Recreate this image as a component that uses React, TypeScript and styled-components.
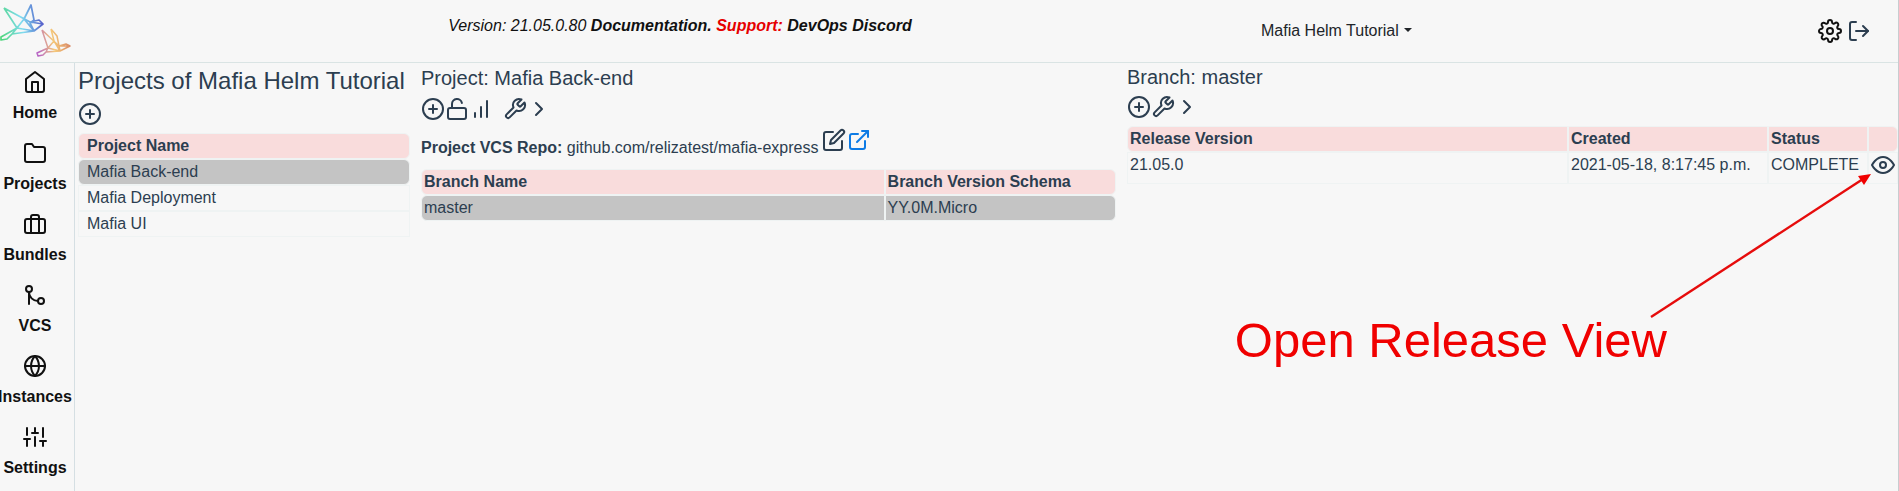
import React from "react";
import styled, { createGlobalStyle, css } from "styled-components";
import {
  FiHome, FiFolder, FiBriefcase, FiGitMerge, FiGlobe, FiSliders, FiPlusCircle,
  FiUnlock, FiBarChart, FiTool, FiChevronRight, FiEdit, FiExternalLink, FiSettings, FiLogOut, FiEye,
} from "react-icons/fi";

const ink = "#2c3e50";

const GlobalStyle = createGlobalStyle`
  *, *::before, *::after { box-sizing: border-box; }
  body {
    margin: 0;
    background: #f7f7f7;
    color: ${ink};
    font: 16px/24px "Liberation Sans", Arial, sans-serif;
  }
`;

const Page = styled.div`
  display: flex;
  flex-direction: column;
  min-height: 100vh;
  border-right: 1px solid #c8cdd0;
`;

const Header = styled.header`
  display: grid;
  grid-template-columns: 75px minmax(0, 1fr) minmax(0, 557px) 80px;
  height: 63px;
  border-bottom: 1px solid #dae4e4;
  color: #111;
`;

const Logo = styled.svg`
  width: 72px;
  height: 60px;
`;

const VersionLine = styled.p`
  margin: 14px 0 0;
  padding-left: 24px;
  text-align: center;
  font-style: italic;
`;

const TextLink = styled.a`
  color: inherit;
  font-weight: bold;
  text-decoration: none;
`;

const Support = styled.strong`
  color: #e60000;
`;

const OrgButton = styled.button`
  display: flex;
  align-items: center;
  align-self: center;
  justify-self: start;
  gap: 5px;
  padding: 0;
  border: 0;
  background: none;
  color: #212529;
  font: inherit;
  &::after {
    content: "";
    margin-bottom: 2px;
    border: 4px solid transparent;
    border-top-color: currentColor;
    border-bottom: 0;
  }
`;

const HeaderIcons = styled.div`
  display: flex;
  align-items: center;
  gap: 5px;
`;

const IconButton = styled.button<{ $color?: string }>`
  display: flex;
  padding: 0;
  border: 0;
  background: none;
  color: ${(p) => p.$color ?? ink};
`;

const Body = styled.div`
  display: flex;
  flex: 1;
`;

const Sidebar = styled.nav`
  display: flex;
  flex: 0 0 75px;
  flex-direction: column;
  padding-top: 7px;
  border-right: 1px solid #d5dfe3;
`;

const NavItem = styled.a`
  display: flex;
  flex-direction: column;
  align-items: center;
  gap: 7px;
  width: 70px;
  height: 71px;
  color: #111;
  font-weight: bold;
  text-decoration: none;
  &:last-child { height: 64px; }
`;

const Columns = styled.main`
  display: grid;
  flex: 1;
  grid-template-columns: 332fr 695fr 771fr;
  column-gap: 11px;
  align-items: start;
  padding-left: 3px;
`;

const Panel = styled.section`
  min-width: 0;
`;

const titleSizes = {
  large: css`font-size: 24px; line-height: 35px;`,
  medium: css`font-size: 20px; line-height: 30px;`,
  small: css`font-size: 20px; line-height: 28px;`,
};

const Title = styled.h1<{ $size: keyof typeof titleSizes }>`
  margin: 0;
  font-weight: normal;
  white-space: nowrap;
  ${(p) => titleSizes[p.$size]}
`;

const Toolbar = styled.div`
  display: flex;
  align-items: center;
  height: 32px;
  margin-bottom: 3px;
`;

const Spaced = styled(IconButton)`
  margin-left: 10px;
`;

const Repo = styled.div`
  display: flex;
  align-items: flex-start;
  gap: 1px;
  height: 41px;
`;

const RepoText = styled.span`
  padding: 8px 3px 0 0;
  white-space: nowrap;
`;

const RepoLink = styled.a`
  display: flex;
  color: #0d7be5;
`;

const Table = styled.table`
  width: 100%;
  table-layout: fixed;
  border-spacing: 0;
  th { background: #f9dcdc; }
  th:first-child { border-top-left-radius: 6px; border-bottom-left-radius: 6px; }
  th:last-child { border-top-right-radius: 6px; border-bottom-right-radius: 6px; }
`;

const cell = css<{ $inset?: boolean }>`
  height: 26px;
  padding: 0 ${(p) => (p.$inset ? 8 : 2)}px;
  border: 1px solid #eff3f3;
  text-align: left;
  vertical-align: top;
  white-space: nowrap;
`;

const Th = styled.th<{ $inset?: boolean; $width?: string }>`
  ${cell}
  width: ${(p) => p.$width ?? "auto"};
`;

const Td = styled.td<{ $inset?: boolean }>`
  ${cell}
`;

const Row = styled.tr<{ $selected?: boolean }>`
  ${(p) => p.$selected && css`
    td { background: #c4c4c4; }
    td:first-child { border-top-left-radius: 6px; border-bottom-left-radius: 6px; }
    td:last-child { border-top-right-radius: 6px; border-bottom-right-radius: 6px; }
  `}
`;

const ReleaseRow = styled(Row)`
  td { height: 32px; }
`;

const Callout = styled.aside`
  position: absolute;
  top: 172px;
  right: 26px;
  width: 640px;
  height: 200px;
  color: #f00000;
  pointer-events: none;
`;

const Arrow = styled.svg`
  position: absolute;
  top: 0;
  right: 0;
`;

const CalloutText = styled.p`
  position: absolute;
  right: 206px;
  bottom: 4px;
  margin: 0;
  font-size: 49px;
  line-height: 56px;
  white-space: nowrap;
`;

const navigation = [
  { label: "Home", Icon: FiHome },
  { label: "Projects", Icon: FiFolder },
  { label: "Bundles", Icon: FiBriefcase },
  { label: "VCS", Icon: FiGitMerge },
  { label: "Instances", Icon: FiGlobe },
  { label: "Settings", Icon: FiSliders },
];

const projects = ["Mafia Back-end", "Mafia Deployment", "Mafia UI"];

function Birds() {
  return (
    <Logo viewBox="0 0 72 60" fill="none" strokeLinejoin="round" role="img" aria-label="Reliza">
      <defs>
        <linearGradient id="large" gradientUnits="userSpaceOnUse" x1="0" y1="30" x2="44" y2="22">
          <stop stopColor="#4fd67c" />
          <stop offset=".5" stopColor="#7fdcf0" />
          <stop offset="1" stopColor="#5458c8" />
        </linearGradient>
        <linearGradient id="small" gradientUnits="userSpaceOnUse" x1="38" y1="50" x2="70" y2="44">
          <stop stopColor="#b765c4" />
          <stop offset=".5" stopColor="#f5c878" />
          <stop offset="1" stopColor="#d98a67" />
        </linearGradient>
      </defs>
      <path stroke="url(#large)" strokeWidth="1.7" d="M4 8 17 28 1 37 1 40 7 39 12 34 34 31 43 24 39 20 30 22 4 8M17 28 24 19 31 5 34 20 30 23 34 31 17 28M24 19 34 31M12 34 17 28M30 22 43 24" />
      <path stroke="url(#small)" strokeWidth="1.5" d="M42 30 48 48 37 53 38 56 43 55 46 52 60 51 70 46 66 44 59 46 42 30M51 29 57 36 59 46 60 51 48 48 54 41 51 29M54 41 60 51M46 52 48 48M59 46 70 46" />
    </Logo>
  );
}

export default function App() {
  return (
    <Page>
      <GlobalStyle />
      <Header>
        <Birds />
        <VersionLine>
          Version: 21.05.0.80 <TextLink href="#docs">Documentation.</TextLink>{" "}
          <Support>Support:</Support> <TextLink href="#discord">DevOps Discord</TextLink>
        </VersionLine>
        <OrgButton>Mafia Helm Tutorial</OrgButton>
        <HeaderIcons>
          <IconButton $color="#111" aria-label="Organization settings"><FiSettings size={24} /></IconButton>
          <IconButton aria-label="Log out"><FiLogOut size={24} /></IconButton>
        </HeaderIcons>
      </Header>
      <Body>
        <Sidebar>
          {navigation.map(({ label, Icon }) => (
            <NavItem key={label} href={`#${label}`}><Icon size={24} />{label}</NavItem>
          ))}
        </Sidebar>
        <Columns>
          <Panel>
            <Title $size="large">Projects of Mafia Helm Tutorial</Title>
            <Toolbar><IconButton aria-label="Add project"><FiPlusCircle size={24} /></IconButton></Toolbar>
            <Table>
              <thead><tr><Th $inset>Project Name</Th></tr></thead>
              <tbody>
                {projects.map((name, i) => (
                  <Row key={name} $selected={i === 0}><Td $inset>{name}</Td></Row>
                ))}
              </tbody>
            </Table>
          </Panel>
          <Panel>
            <Title as="h2" $size="medium">Project: Mafia Back-end</Title>
            <Toolbar>
              <IconButton aria-label="Add branch"><FiPlusCircle size={24} /></IconButton>
              <IconButton aria-label="Visibility"><FiUnlock size={24} /></IconButton>
              <IconButton aria-label="Metrics"><FiBarChart size={24} /></IconButton>
              <Spaced aria-label="Tools"><FiTool size={24} /></Spaced>
              <IconButton aria-label="Expand"><FiChevronRight size={24} /></IconButton>
            </Toolbar>
            <Repo>
              <RepoText><b>Project VCS Repo:</b> github.com/relizatest/mafia-express</RepoText>
              <IconButton aria-label="Edit repository"><FiEdit size={24} /></IconButton>
              <RepoLink href="#repo" aria-label="Open repository"><FiExternalLink size={24} /></RepoLink>
            </Repo>
            <Table>
              <thead><tr><Th>Branch Name</Th><Th $width="33.3%">Branch Version Schema</Th></tr></thead>
              <tbody><Row $selected><Td>master</Td><Td>YY.0M.Micro</Td></Row></tbody>
            </Table>
          </Panel>
          <Panel>
            <Title as="h2" $size="small">Branch: master</Title>
            <Toolbar>
              <IconButton aria-label="Add release"><FiPlusCircle size={24} /></IconButton>
              <IconButton aria-label="Branch tools"><FiTool size={24} /></IconButton>
              <IconButton aria-label="Expand branch"><FiChevronRight size={24} /></IconButton>
            </Toolbar>
            <Table>
              <thead>
                <tr><Th>Release Version</Th><Th $width="200px">Created</Th><Th $width="100px">Status</Th><Th $width="30px" aria-label="View" /></tr>
              </thead>
              <tbody>
                <ReleaseRow>
                  <Td>21.05.0</Td><Td>2021-05-18, 8:17:45 p.m.</Td><Td>COMPLETE</Td>
                  <Td><IconButton aria-label="Open release view"><FiEye size={24} /></IconButton></Td>
                </ReleaseRow>
              </tbody>
            </Table>
          </Panel>
        </Columns>
      </Body>
      <Callout>
        <Arrow width="226" height="148" viewBox="0 0 226 148">
          <path d="M4 145 216 7" stroke="#e60c0c" strokeWidth="2.4" />
          <path d="M224 2 217 13 211 4Z" fill="currentColor" />
        </Arrow>
        <CalloutText>Open Release View</CalloutText>
      </Callout>
    </Page>
  );
}
